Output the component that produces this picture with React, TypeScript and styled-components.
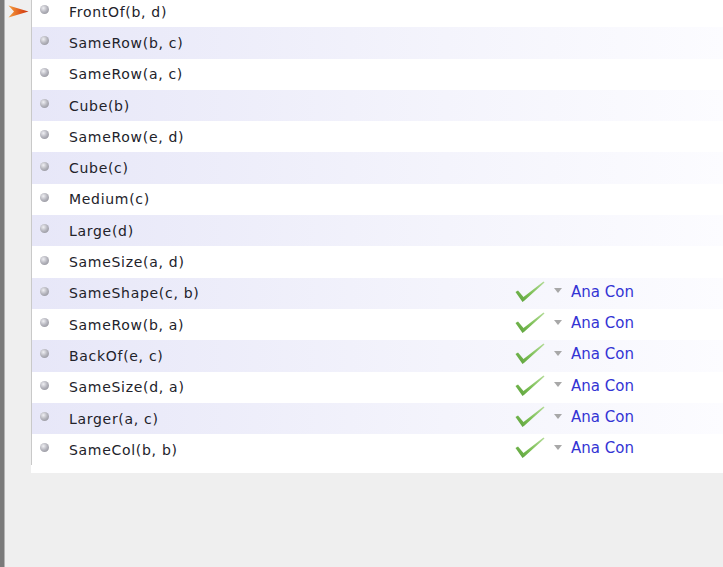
import React from "react";
import styled, { createGlobalStyle } from "styled-components";

const Global = createGlobalStyle`
  html, body { margin: 0; padding: 0; background: #efefef; overflow: hidden; }
  #root { min-height: 100vh; }
`;

const Page = styled.div`
  display: flex;
  height: 567px;
  background: #efefef;
  font-family: "DejaVu Sans", Verdana, sans-serif;
`;

const FrameEdge = styled.div`
  width: 4px;
  flex: 0 0 4px;
  background: #7a7a7a;
  border-right: 1px solid #b4b4b4;
`;

const Gutter = styled.div`
  flex: 0 0 26px;
  display: flex;
  flex-direction: column;
  align-items: flex-start;
  padding-top: 5px;
  padding-left: 3px;
  box-sizing: border-box;
`;

const Main = styled.div`
  flex: 1;
  display: flex;
  flex-direction: column;
`;

const ListPanel = styled.div`
  background: #ffffff;
  margin-top: -4px;
  padding-bottom: 8px;
`;

const Rows = styled.div`
  border-left: 1px solid #c9c9c9;
`;

const Row = styled.div<{ $band: boolean }>`
  display: flex;
  align-items: center;
  height: 31.3px;
  box-sizing: border-box;
  background: ${(p) =>
    p.$band ? "linear-gradient(to right, #e7e7f8, #f4f4fc 60%, #fcfcff)" : "#ffffff"};
`;

const Bullet = styled.span`
  flex: 0 0 9px;
  width: 9px;
  height: 9px;
  border-radius: 50%;
  margin-left: 8px;
  margin-right: 20px;
  margin-bottom: 4px;
  background: radial-gradient(circle at 38% 35%, #f0f0f4 0%, #b8b8c0 45%, #86868f 100%);
`;

const Label = styled.span`
  flex: 0 0 446px;
  font-size: 14px;
  letter-spacing: 0.7px;
  color: #22222a;
  white-space: nowrap;
`;

const Status = styled.span`
  display: flex;
  align-items: center;
`;

const Triangle = styled.span`
  width: 0;
  height: 0;
  border-left: 4px solid transparent;
  border-right: 4px solid transparent;
  border-top: 5px solid #a8a8a8;
  margin-left: 9px;
  margin-right: 9px;
  margin-bottom: 5px;
`;

const Author = styled.span`
  font-size: 15px;
  color: #3434d4;
  margin-bottom: 3px;
`;

const Arrow = () => (
  <svg width="21" height="13" viewBox="0 0 21 13">
    <defs>
      <linearGradient id="ag" x1="0" y1="0" x2="1" y2="0">
        <stop offset="0" stopColor="#f4a040" />
        <stop offset="0.6" stopColor="#e0581c" />
        <stop offset="1" stopColor="#c83410" />
      </linearGradient>
    </defs>
    <path d="M0.5 0.5 L20.5 6.5 L0.5 12.5 L6 6.5 Z" fill="url(#ag)" />
  </svg>
);

const Check = () => (
  <svg width="30" height="22" viewBox="0 0 30 22">
    <defs>
      <linearGradient id="cg" x1="0" y1="1" x2="1" y2="0">
        <stop offset="0" stopColor="#5a9e3a" />
        <stop offset="0.45" stopColor="#7cbf55" />
        <stop offset="1" stopColor="#b4dc98" />
      </linearGradient>
    </defs>
    <path
      d="M0.5 11 L3 9.5 L8.5 16 L28.5 0.5 L29.5 1.5 L9.5 19.5 L7.5 21 Z"
      fill="url(#cg)"
    />
  </svg>
);

const CheckWrap = styled.span`
  display: flex;
  margin-top: -3px;
`;

type Item = { label: string; checked?: boolean };

const items: Item[] = [
  { label: "FrontOf(b, d)" },
  { label: "SameRow(b, c)" },
  { label: "SameRow(a, c)" },
  { label: "Cube(b)" },
  { label: "SameRow(e, d)" },
  { label: "Cube(c)" },
  { label: "Medium(c)" },
  { label: "Large(d)" },
  { label: "SameSize(a, d)" },
  { label: "SameShape(c, b)", checked: true },
  { label: "SameRow(b, a)", checked: true },
  { label: "BackOf(e, c)", checked: true },
  { label: "SameSize(d, a)", checked: true },
  { label: "Larger(a, c)", checked: true },
  { label: "SameCol(b, b)", checked: true },
];

export default function App() {
  return (
    <>
      <Global />
      <Page>
        <FrameEdge />
        <Gutter>
          <Arrow />
        </Gutter>
        <Main>
          <ListPanel>
            <Rows>
              {items.map((it, i) => (
                <Row key={i} $band={i % 2 === 1}>
                  <Bullet />
                  <Label>{it.label}</Label>
                  {it.checked && (
                    <Status>
                      <CheckWrap>
                        <Check />
                      </CheckWrap>
                      <Triangle />
                      <Author>Ana Con</Author>
                    </Status>
                  )}
                </Row>
              ))}
            </Rows>
          </ListPanel>
        </Main>
      </Page>
    </>
  );
}
